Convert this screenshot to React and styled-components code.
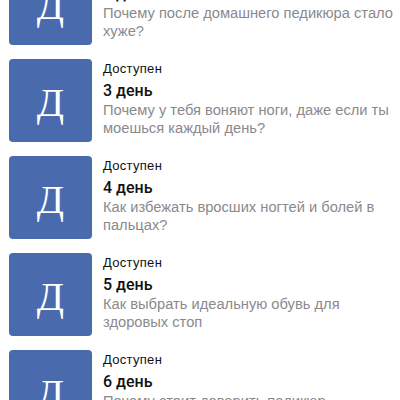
import React from "react";
import styled, { createGlobalStyle } from "styled-components";

const GlobalStyle = createGlobalStyle`
  body {
    margin: 0;
    background: #ffffff;
    font-family: "Liberation Sans", Arial, sans-serif;
    overflow: hidden;
  }
`;

const lessons = [
  { day: 2, text: "Почему после домашнего педикюра стало хуже?" },
  { day: 3, text: "Почему у тебя воняют ноги, даже если ты моешься каждый день?" },
  { day: 4, text: "Как избежать вросших ногтей и болей в пальцах?" },
  { day: 5, text: "Как выбрать идеальную обувь для здоровых стоп" },
  { day: 6, text: "Почему стоит доверить педикюр профессионалу?" },
];

const App = () => {
  return (
    <>
      <GlobalStyle />
      <List>
        {lessons.map((l) => (
          <Item key={l.day}>
            <Cover>Д</Cover>
            <Info>
              <Status>Доступен</Status>
              <Title>{l.day} день</Title>
              <Description>{l.text}</Description>
            </Info>
          </Item>
        ))}
      </List>
    </>
  );
};

const List = styled.div`
  display: flex;
  flex-direction: column;
  gap: 14px;
  margin-top: -38px;
  padding: 0 0 0 9px;
`;

const Item = styled.div`
  display: flex;
  align-items: flex-start;
  gap: 11px;
`;

const Cover = styled.div`
  flex: 0 0 83px;
  height: 83px;
  border-radius: 4px;
  background: #4a6aae;
  color: #ffffff;
  display: flex;
  align-items: center;
  justify-content: center;
  font-family: "Liberation Serif", "Times New Roman", serif;
  font-size: 40px;
  padding-top: 4px;
  box-sizing: border-box;
`;

const Info = styled.div`
  display: flex;
  flex-direction: column;
  padding-top: 2px;
  min-width: 0;
`;

const Status = styled.div`
  font-size: 13px;
  line-height: 16px;
  letter-spacing: 0.3px;
  color: #111111;
`;

const Title = styled.div`
  margin-top: 4px;
  font-family: Roboto, "Liberation Sans", sans-serif;
  font-size: 16px;
  line-height: 20px;
  font-weight: 500;
  color: #111111;
`;

const Description = styled.div`
  font-size: 14.7px;
  line-height: 18px;
  color: #8a8a8e;
`;

export default App;
